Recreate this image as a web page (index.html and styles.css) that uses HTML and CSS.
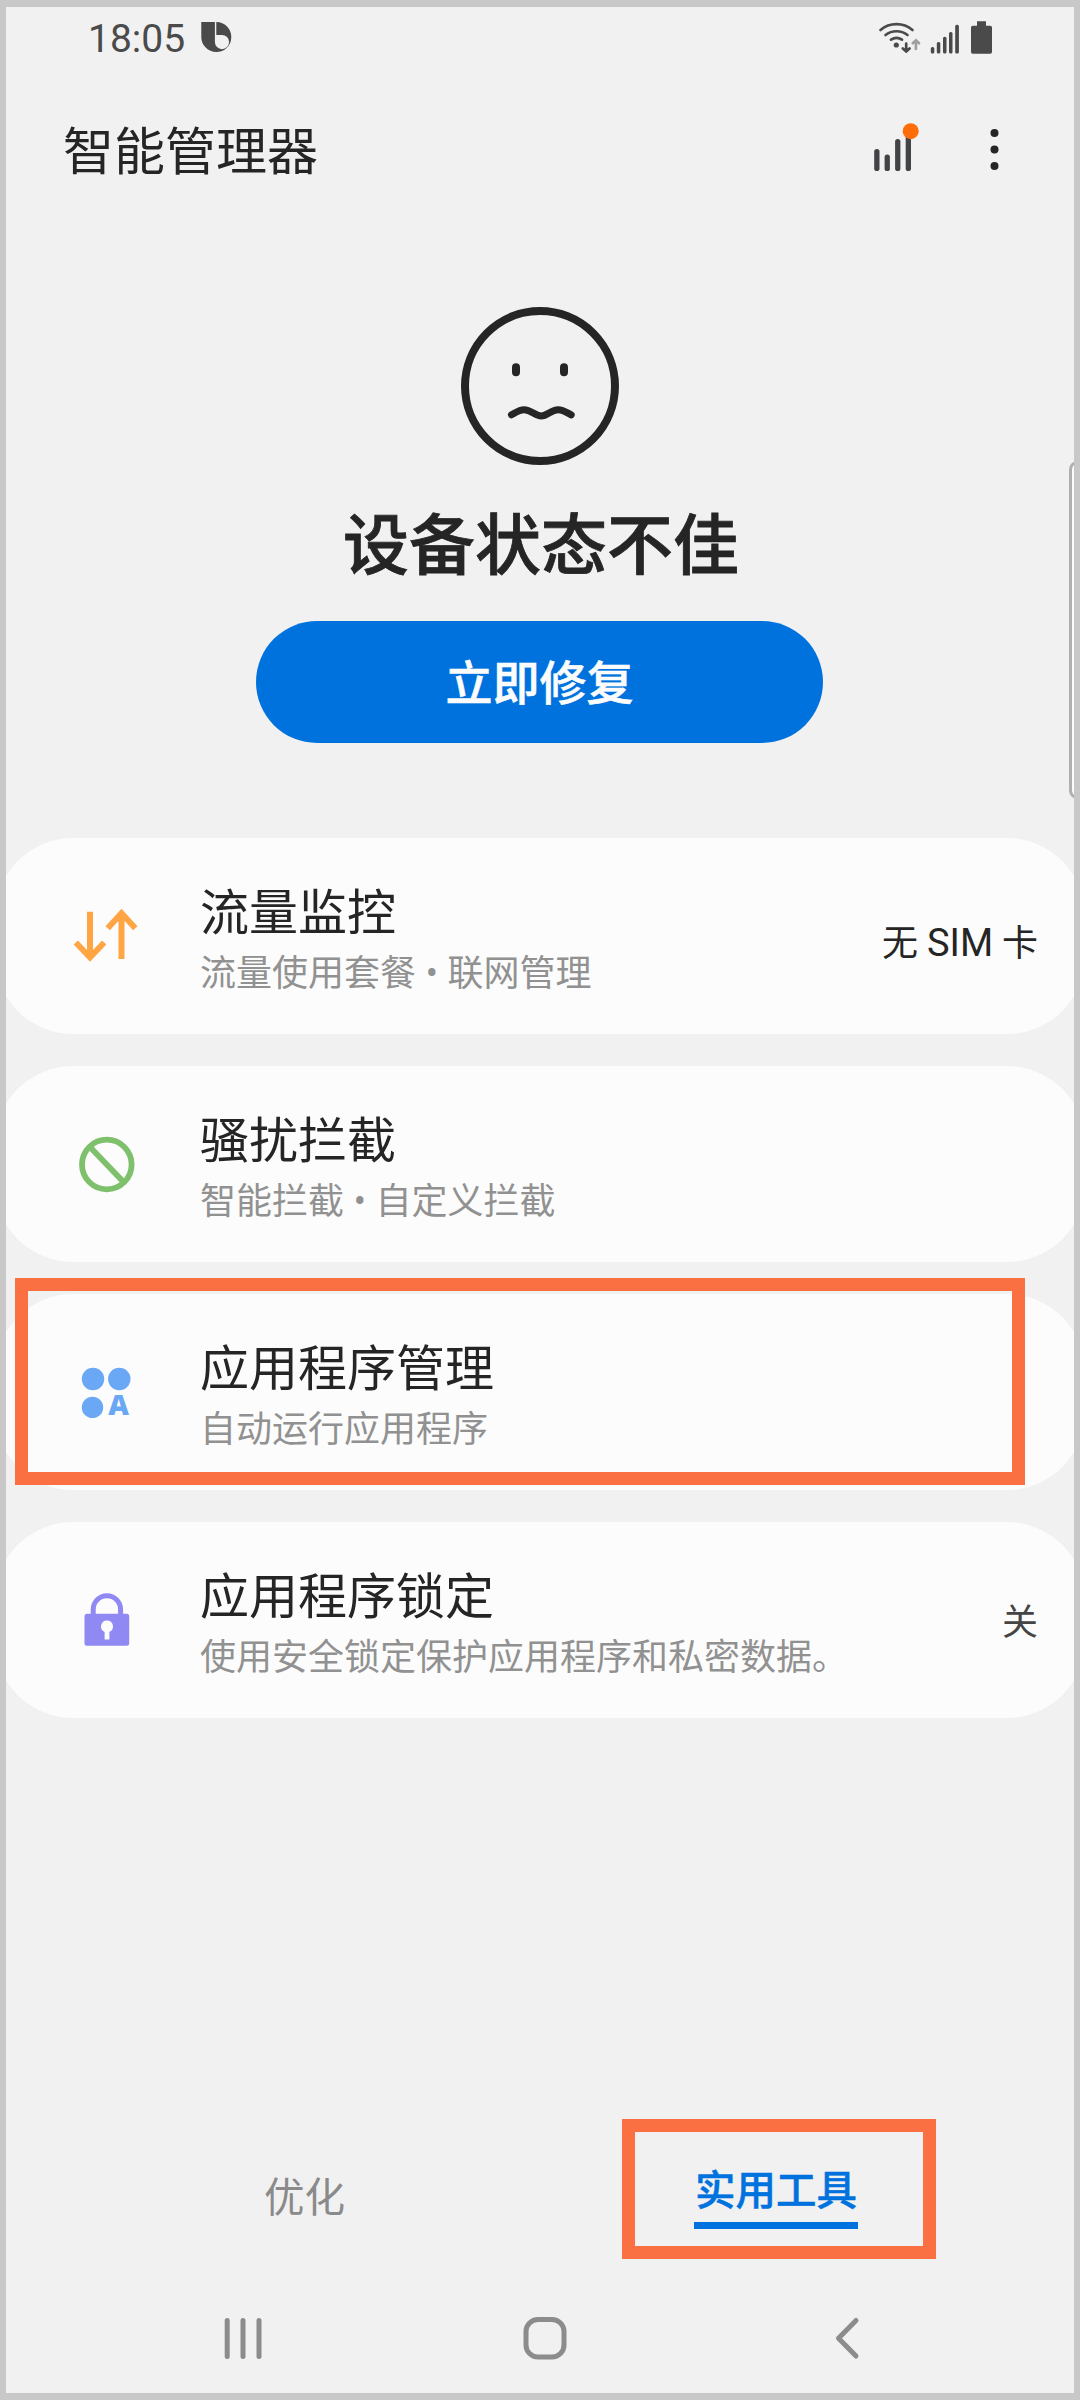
FILE: index.html
```html
<!DOCTYPE html>
<html lang="zh-CN">
<head>
<meta charset="utf-8">
<title>智能管理器</title>
<link rel="stylesheet" href="styles.css">
</head>
<body>
<main class="screen">
  <div class="statusbar">
    <span class="clock">18:05</span>
    <svg class="bixby" width="32" height="32" viewBox="0 0 32 32">
      <path d="M1.300 1h15.200A15 15 0 1 1 1.300 16z"/>
      <path class="bixby-hole" d="M14.900 0h1.400v14H22a7.100 7.100 0 1 1-7.100 7.100z"/>
    </svg>
    <svg class="status-icons" width="122" height="36" viewBox="876 18 122 36">
      <g class="stroke-icon">
        <path d="M880.500 29a25 25 0 0 1 32 0M885.500 34a18 18 0 0 1 22 0M891 38.700a10 10 0 0 1 11 0"/>
        <path d="M906.200 42.500v7M902.800 47.500l3.400 3 3.400-3"/>
        <path class="faint" d="M915.900 48v-8M912.800 42.300l3.100-3 3.100 3"/>
      </g>
      <circle cx="896.300" cy="44" r="2.600"/>
      <rect x="930.800" y="46" width="3.500" height="6.500" rx="1.500"/>
      <rect x="936.800" y="41" width="3.500" height="11.500" rx="1.500"/>
      <rect x="943" y="35.700" width="3.500" height="16.800" rx="1.500"/>
      <rect x="949" y="31" width="3.500" height="21.500" rx="1.500"/>
      <rect x="955.200" y="23.800" width="3.700" height="28.700" rx="1.500"/>
      <path d="M977 20.300h9v4.400h4.300q1.700 0 1.700 1.700v24.700q0 1.700-1.700 1.700h-17.600q-1.700 0-1.700-1.700V26.400q0-1.700 1.700-1.700h4.300z"/>
    </svg>
  </div>

  <header class="header">
    <h1 class="title">智能管理器</h1>
    <svg class="actions" width="130" height="60" viewBox="870 120 130 60">
      <g class="bars">
        <rect x="874.200" y="149" width="5.300" height="22" rx="2.600"/>
        <rect x="884.600" y="154.500" width="5.300" height="16.500" rx="2.600"/>
        <rect x="895.100" y="139" width="5.300" height="32" rx="2.600"/>
        <rect x="905.700" y="131" width="5.300" height="40" rx="2.600"/>
      </g>
      <circle class="alert" cx="910.700" cy="131.200" r="8"/>
      <circle cx="994.500" cy="133" r="4"/><circle cx="994.500" cy="149.500" r="4"/><circle cx="994.500" cy="166" r="4"/>
    </svg>
  </header>

  <section class="state">
    <svg class="face" width="158" height="158" viewBox="0 0 158 158">
      <circle cx="79" cy="79" r="75"/>
      <path class="eye" d="M55 60.200v5M103 60.200v5"/>
      <path class="mouth" d="M50.500 107.800c4.500-2.500 8-5.100 12.500-5.100 7.500 0 10.800 6.300 17.200 6.300s9.600-6.300 17-6.300c4.500 0 8.500 2.700 13 5.100"/>
    </svg>
    <h2 class="state-text">设备状态不佳</h2>
    <button class="fix">立即修复</button>
  </section>

  <section class="cards">
    <article class="card">
      <svg class="icon" width="60" height="60" viewBox="77 906 60 60">
        <path class="data" d="M90 911.700V957M75.800 942.500 90 957.500l14.200-15M121.500 959V914M107.700 928.300l13.800-15 13.800 15"/>
      </svg>
      <div class="text"><h3 class="name">流量监控</h3><p class="desc">流量使用套餐 • 联网管理</p></div>
      <span class="value">无 <span class="latin">SIM</span> 卡</span>
    </article>
    <article class="card">
      <svg class="icon" width="60" height="60" viewBox="77 1134 60 60">
        <g class="ban"><circle cx="106.800" cy="1164.500" r="24.800"/><path d="m89.500 1146.500 34.500 36"/></g>
      </svg>
      <div class="text"><h3 class="name">骚扰拦截</h3><p class="desc">智能拦截 • 自定义拦截</p></div>
    </article>
    <article class="card">
      <svg class="icon apps" width="60" height="60" viewBox="77 1362 60 60">
        <circle cx="93" cy="1379" r="11.200"/><circle cx="119.300" cy="1379" r="11.200"/><circle cx="92.500" cy="1407.400" r="10.700"/>
        <text x="118.700" y="1415" text-anchor="middle">A</text>
      </svg>
      <div class="text"><h3 class="name">应用程序管理</h3><p class="desc">自动运行应用程序</p></div>
      <div class="highlight highlight-card"></div>
    </article>
    <article class="card">
      <svg class="icon lock" width="60" height="60" viewBox="77 1590 60 60">
        <path class="shackle" d="M93.200 1616v-6.500a13.700 13.700 0 0 1 27.400 0v6.500"/>
        <rect x="84.500" y="1613.800" width="44.700" height="32" rx="2.500"/>
        <path class="keyhole" d="M107 1620.500a6 6 0 0 1 2.400 11.500v7.500h-4.800V1632a6 6 0 0 1 2.400-11.500z"/>
      </svg>
      <div class="text"><h3 class="name">应用程序锁定</h3><p class="desc">使用安全锁定保护应用程序和私密数据。</p></div>
      <span class="value off">关</span>
    </article>
  </section>

  <nav class="tabs">
    <a class="tab">优化</a>
    <a class="tab active">实用工具<span class="highlight highlight-tab"></span></a>
  </nav>

  <footer class="navbar">
    <svg width="40" height="44" viewBox="0 0 40 44"><path d="M3.200 4.500v36M19 4.500v36M35 4.500v36"/></svg>
    <svg class="home" width="44" height="44" viewBox="0 0 44 44"><rect x="3" y="3.500" width="38" height="37.500" rx="12"/></svg>
    <svg width="28" height="44" viewBox="0 0 28 44"><path d="M22 4.500 4.500 22.200 22 40"/></svg>
  </footer>
  <div class="edge-handle"></div>
</main>
</body>
</html>
```
FILE: styles.css
```css
* { box-sizing: border-box; }

body {
  margin: 0;
  font-family: Roboto, "Noto Sans CJK SC", sans-serif;
  color: #252525;
}

h1, h2, h3, p { margin: 0; font-weight: 400; }

.screen {
  position: relative;
  display: flex;
  flex-direction: column;
  width: 1080px;
  height: 2400px;
  border: solid #c8c8c8;
  border-width: 7px 6px;
  background: #f1f1f1;
  overflow: hidden;
}

.statusbar {
  display: flex;
  align-items: center;
  height: 60px;
  padding: 0 76px 0 82px;
  color: #4a4a4a;
  fill: #4a4a4a;
}
.clock { padding-top: 3px; font-size: 39px; line-height: 60px; }
.bixby { margin-left: 15px; }
.bixby-hole { fill: #f1f1f1; }
.status-icons { margin-left: auto; }
.stroke-icon { fill: none; stroke: #4a4a4a; stroke-width: 2.700px; stroke-linecap: round; }
.faint { stroke: #a0a0a0; }

.header {
  display: flex;
  align-items: center;
  justify-content: space-between;
  height: 166px;
  padding: 0 74px 0 57px;
}
.title { padding-top: 6px; font-size: 51px; line-height: 60px; }
.actions { fill: #252525; }
.bars { fill: #414346; }
.alert { fill: #ff6c0a; }

.state {
  display: flex;
  flex-direction: column;
  align-items: center;
  height: 605px;
  padding-top: 74px;
}
.face { fill: none; stroke: #252525; stroke-width: 8px; stroke-linecap: round; }
.mouth { stroke-width: 7px; stroke-linejoin: round; }
.state-text {
  margin: 42px 0 0 2px;
  font-size: 66px;
  font-weight: 500;
  line-height: 80px;
  -webkit-text-stroke: 0.800px;
}
.fix {
  width: 567px;
  height: 122px;
  margin: 34px 1px 0 0;
  padding: 3px 0 0;
  border: 0;
  border-radius: 61px;
  background: #0072de;
  color: #fcfcfc;
  font: 500 47px/119px Roboto, "Noto Sans CJK SC", sans-serif;
  -webkit-text-stroke: 0.600px;
}

.cards { display: flex; flex-direction: column; gap: 32px; margin: 0 -11px; }
.card {
  position: relative;
  display: flex;
  align-items: center;
  height: 196px;
  padding: 0 47px 0 82px;
  border-radius: 78px;
  background: #fcfcfc;
}
.icon { overflow: visible; }
.text { margin-left: 63px; padding-top: 10px; }
.name { font-size: 49px; line-height: 66px; }
.desc { font-size: 36px; line-height: 55px; color: #919191; word-spacing: 0.700px; }
.value { margin-left: auto; padding-top: 15px; font-size: 36px; line-height: 48px; }
.latin { font-size: 38px; }
.off { padding-top: 5px; color: #454545; }

.data { fill: none; stroke: #ffa544; stroke-width: 6px; }
.ban { fill: none; stroke: #7fc06c; stroke-width: 5.800px; }
.apps { fill: #6aa8f5; }
.apps text { font: 800 28.500px "Open Sans", sans-serif; }
.lock { fill: #9088f3; }
.shackle { fill: none; stroke: #9088f3; stroke-width: 5px; }
.keyhole { fill: #fcfcfc; }

.highlight { position: absolute; border: 13px solid #fb7043; }
.highlight-card { left: 20px; top: -16px; width: 1010px; height: 207px; }
.highlight-tab { left: -72px; top: -42px; width: 314px; height: 140px; }

.tabs {
  display: flex;
  justify-content: space-between;
  align-items: flex-start;
  height: 164px;
  margin-top: auto;
  padding: 0 216px 0 258px;
  font-size: 40.500px;
}
.tab { margin-top: 49px; line-height: 60px; color: #8a8a8a; }
.active {
  position: relative;
  width: 164px;
  height: 68px;
  margin-top: 42px;
  padding-left: 1px;
  border-bottom: 7px solid #0072de;
  color: #0072de;
  font-weight: 500;
  -webkit-text-stroke: 0.500px;
}

.navbar {
  display: flex;
  align-items: center;
  justify-content: space-between;
  height: 110px;
  padding: 0 212px 0 218px;
  fill: none;
}
.navbar svg { stroke: #8c8c8c; stroke-width: 5px; stroke-linecap: round; stroke-linejoin: round; }
.home { margin-right: 8px; }

.edge-handle {
  position: absolute;
  right: -12px;
  top: 454px;
  width: 17px;
  height: 338px;
  border: 3px solid #b0b0b0;
  border-radius: 9px;
  background: #fbfbfb;
}
```
